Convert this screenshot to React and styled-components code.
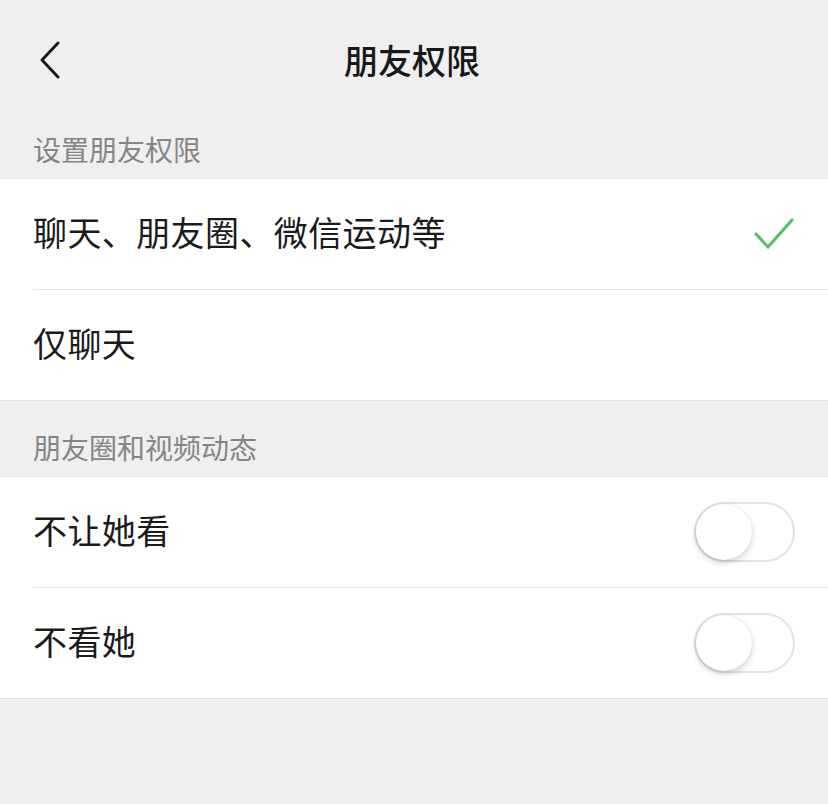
import React, { useState } from 'react';
import styled, { createGlobalStyle } from 'styled-components';

const GlobalStyle = createGlobalStyle`
  html, body {
    margin: 0;
    padding: 0;
    background: #efefef;
  }
  body {
    font-family: "Noto Sans CJK SC", "Noto Sans", sans-serif;
  }
`;

const Check = () => (
  <svg width="42" height="34" viewBox="0 0 42 34">
    <polyline
      points="3,17 15,30 39,3"
      fill="none"
      stroke="#5bbd72"
      strokeWidth="3.2"
      strokeLinecap="round"
      strokeLinejoin="round"
    />
  </svg>
);

function App() {
  const [level, setLevel] = useState('all');
  const [hideMine, setHideMine] = useState(false);
  const [hideHers, setHideHers] = useState(false);

  return (
    <Page>
      <GlobalStyle />
      <NavBar>
        <BackButton aria-label="返回">
          <svg width="24" height="40" viewBox="0 0 24 40">
            <polyline
              points="19,3 3,20 19,37"
              fill="none"
              stroke="#1a1a1a"
              strokeWidth="3"
              strokeLinecap="round"
              strokeLinejoin="round"
            />
          </svg>
        </BackButton>
        <Title>朋友权限</Title>
      </NavBar>

      <SectionTitle first>设置朋友权限</SectionTitle>
      <Group>
        <Row onClick={() => setLevel('all')}>
          <Label>聊天、朋友圈、微信运动等</Label>
          {level === 'all' && <Check />}
        </Row>
        <Row onClick={() => setLevel('chat')}>
          <Label>仅聊天</Label>
          {level === 'chat' && <Check />}
        </Row>
      </Group>

      <SectionTitle>朋友圈和视频动态</SectionTitle>
      <Group>
        <Row>
          <Label>不让她看</Label>
          <Switch on={hideMine} onClick={() => setHideMine(!hideMine)}>
            <Knob on={hideMine} />
          </Switch>
        </Row>
        <Row>
          <Label>不看她</Label>
          <Switch on={hideHers} onClick={() => setHideHers(!hideHers)}>
            <Knob on={hideHers} />
          </Switch>
        </Row>
      </Group>
    </Page>
  );
}

export default App;

const Page = styled.div`
  width: 828px;
  min-height: 804px;
  background: #efefef;
`;

const NavBar = styled.div`
  position: relative;
  height: 120px;
  display: flex;
  align-items: center;
  justify-content: center;
`;

const BackButton = styled.div`
  position: absolute;
  left: 39px;
  top: 40px;
  width: 24px;
  height: 40px;
  display: flex;
`;

const Title = styled.div`
  font-size: 34px;
  font-weight: 500;
  color: #181818;
  margin-left: -4px;
  margin-top: -2px;
`;

const SectionTitle = styled.div`
  height: ${p => (p.first ? '58px' : '75px')};
  box-sizing: border-box;
  display: flex;
  align-items: flex-end;
  padding: 0 33px 9px;
  font-size: 28px;
  line-height: 40px;
  color: #858585;
`;

const Group = styled.div`
  background: #fff;
  border-top: 1px solid #e6e6e6;
  border-bottom: 1px solid #e2e2e2;
`;

const Row = styled.div`
  height: 110px;
  margin-left: 33px;
  padding-right: 33px;
  display: flex;
  align-items: center;
  justify-content: space-between;
  cursor: pointer;

  & + & {
    border-top: 1px solid #e8e8e8;
  }
`;

const Label = styled.div`
  font-size: 34px;
  color: #1b1b1b;
  line-height: 48px;
  letter-spacing: 0.4px;
  margin-top: -4px;
`;

const Switch = styled.div`
  position: relative;
  width: 101px;
  height: 60px;
  box-sizing: border-box;
  border-radius: 30px;
  border: 2px solid ${p => (p.on ? '#07c160' : '#e2e2e2')};
  background: ${p => (p.on ? '#07c160' : '#fff')};
  transition: background 0.2s;
`;

const Knob = styled.div`
  position: absolute;
  top: 0;
  left: ${p => (p.on ? '41px' : '0')};
  width: 56px;
  height: 56px;
  border-radius: 50%;
  background: #fff;
  box-shadow: 0 3px 6px rgba(0, 0, 0, 0.18), 0 0 1px rgba(0, 0, 0, 0.15);
  transition: left 0.2s;
`;
